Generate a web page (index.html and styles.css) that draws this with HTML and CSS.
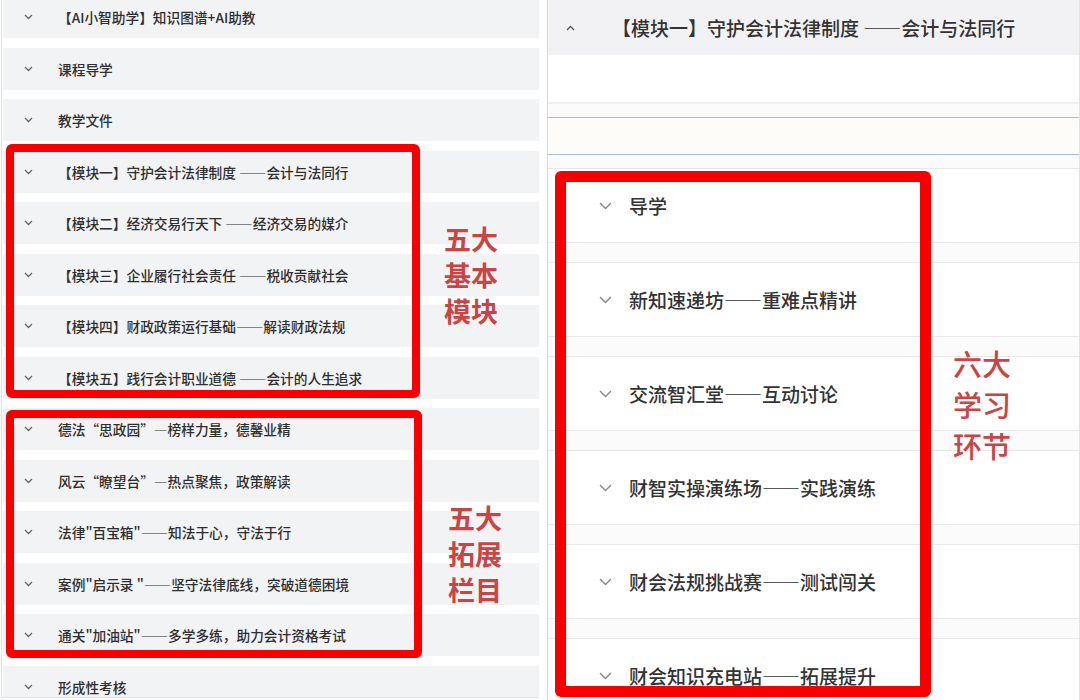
FILE: index.html
```
<!DOCTYPE html>
<html lang="zh-CN">
<head>
  <meta charset="UTF-8" />
  <title>课程目录</title>
  <link rel="stylesheet" href="styles.css">
</head>
<body>
  <div class="page">
    <section class="catalog">
      <ul class="rows">
        <li class="row"><svg class="chev" viewBox="0 0 9 6"><polyline points="1,1 4.5,4.5 8,1"/></svg><span>【AI小智助学】知识图谱+AI助教</span></li>
        <li class="row"><svg class="chev" viewBox="0 0 9 6"><polyline points="1,1 4.5,4.5 8,1"/></svg><span>课程导学</span></li>
        <li class="row"><svg class="chev" viewBox="0 0 9 6"><polyline points="1,1 4.5,4.5 8,1"/></svg><span>教学文件</span></li>
        <li class="row"><svg class="chev" viewBox="0 0 9 6"><polyline points="1,1 4.5,4.5 8,1"/></svg><span>【模块一】守护会计法律制度 ——会计与法同行</span></li>
        <li class="row"><svg class="chev" viewBox="0 0 9 6"><polyline points="1,1 4.5,4.5 8,1"/></svg><span>【模块二】经济交易行天下 ——经济交易的媒介</span></li>
        <li class="row"><svg class="chev" viewBox="0 0 9 6"><polyline points="1,1 4.5,4.5 8,1"/></svg><span>【模块三】企业履行社会责任 ——税收贡献社会</span></li>
        <li class="row"><svg class="chev" viewBox="0 0 9 6"><polyline points="1,1 4.5,4.5 8,1"/></svg><span>【模块四】财政政策运行基础——解读财政法规</span></li>
        <li class="row"><svg class="chev" viewBox="0 0 9 6"><polyline points="1,1 4.5,4.5 8,1"/></svg><span>【模块五】践行会计职业道德 ——会计的人生追求</span></li>
        <li class="row"><svg class="chev" viewBox="0 0 9 6"><polyline points="1,1 4.5,4.5 8,1"/></svg><span>德法“思政园”—榜样力量，德馨业精</span></li>
        <li class="row"><svg class="chev" viewBox="0 0 9 6"><polyline points="1,1 4.5,4.5 8,1"/></svg><span>风云“瞭望台”—热点聚焦，政策解读</span></li>
        <li class="row"><svg class="chev" viewBox="0 0 9 6"><polyline points="1,1 4.5,4.5 8,1"/></svg><span>法律"百宝箱"——知法于心，守法于行</span></li>
        <li class="row"><svg class="chev" viewBox="0 0 9 6"><polyline points="1,1 4.5,4.5 8,1"/></svg><span>案例"启示录 "——坚守法律底线，突破道德困境</span></li>
        <li class="row"><svg class="chev" viewBox="0 0 9 6"><polyline points="1,1 4.5,4.5 8,1"/></svg><span>通关"加油站"——多学多练，助力会计资格考试</span></li>
        <li class="row"><svg class="chev" viewBox="0 0 9 6"><polyline points="1,1 4.5,4.5 8,1"/></svg><span>形成性考核</span></li>
      </ul>
    </section>

    <section class="module">
      <div class="module-head">
        <svg class="caret" viewBox="0 0 9 6"><polyline points="1,5 4.5,1.5 8,5"/></svg>
        <span>【模块一】守护会计法律制度 ——会计与法同行</span>
      </div>
      <div class="blank"></div>
      <div class="editor"></div>
      <ul class="steps">
        <li class="step"><svg class="chev-lg" viewBox="0 0 13 8"><polyline points="1,1 6.5,6.5 12,1"/></svg><span>导学</span></li>
        <li class="step"><svg class="chev-lg" viewBox="0 0 13 8"><polyline points="1,1 6.5,6.5 12,1"/></svg><span>新知速递坊——重难点精讲</span></li>
        <li class="step"><svg class="chev-lg" viewBox="0 0 13 8"><polyline points="1,1 6.5,6.5 12,1"/></svg><span>交流智汇堂——互动讨论</span></li>
        <li class="step"><svg class="chev-lg" viewBox="0 0 13 8"><polyline points="1,1 6.5,6.5 12,1"/></svg><span>财智实操演练场——实践演练</span></li>
        <li class="step"><svg class="chev-lg" viewBox="0 0 13 8"><polyline points="1,1 6.5,6.5 12,1"/></svg><span>财会法规挑战赛——测试闯关</span></li>
        <li class="step"><svg class="chev-lg" viewBox="0 0 13 8"><polyline points="1,1 6.5,6.5 12,1"/></svg><span>财会知识充电站——拓展提升</span></li>
      </ul>
    </section>

    <!-- annotations drawn over the screenshots -->
    <div class="mark mark-basic"></div>
    <div class="mark mark-ext"></div>
    <div class="mark mark-steps"></div>
    <div class="note note-basic">五大<br>基本<br>模块</div>
    <div class="note note-ext">五大<br>拓展<br>栏目</div>
    <div class="note note-steps">六大<br>学习<br>环节</div>
  </div>
</body>
</html>
```

FILE: styles.css
```
body {
  margin: 0;
  font-family: "Noto Sans CJK SC", "Noto Sans", sans-serif;
  background-color: #fff;
  color: #333;
}

ul {
  list-style: none;
  margin: 0;
  padding: 0;
}

.page {
  position: relative;
  display: flex;
  gap: 8px;
  width: 1080px;
  height: 700px;
  overflow: hidden;
}

/* left: course catalogue */
.catalog {
  width: 536px;
  height: 697px;
  margin-left: 1px;
  padding-left: 1px;
  border-left: 1px solid #e3e3e3;
  border-bottom: 1px solid #e3e3e3;
  overflow: hidden;
}

.rows {
  display: flex;
  flex-direction: column;
  gap: 9.5px;
  margin-top: -4px;
}

.row {
  display: flex;
  align-items: center;
  height: 42px;
  flex-shrink: 0;
  padding-left: 21px;
  background-color: #f2f3f5;
  font-size: 13.7px;
  font-weight: 500;
  color: #2e2e2e;
}

.chev {
  width: 9px;
  height: 6px;
  margin-right: 25px;
  fill: none;
  stroke: #666;
  stroke-width: 1.3;
}

/* right: opened module */
.module {
  flex: 1;
  border-left: 1px solid #dcdcdc;
  border-right: 1px solid #e3e3e3;
  background-color: #fbfbfb;
}

.module-head {
  display: flex;
  align-items: center;
  height: 55px;
  padding-left: 18px;
  background-color: #f2f2f4;
  font-size: 19px;
  font-weight: 500;
  color: #333;
}

.caret {
  width: 9px;
  height: 6px;
  margin-right: 37px;
  fill: none;
  stroke: #555;
  stroke-width: 1.3;
}

.blank {
  height: 47px;
  background-color: #fff;
  border-bottom: 2px solid #f0f0f0;
}

.editor {
  height: 36px;
  margin-top: 13px;
  border-top: 1px solid #a9bdd5;
  border-bottom: 1px solid #a9bdd5;
  background-color: #fdfcf8;
}

.steps {
  display: flex;
  flex-direction: column;
  gap: 19px;
  margin-top: 13px;
}

.step {
  display: flex;
  align-items: center;
  height: 73px;
  flex-shrink: 0;
  padding-left: 51px;
  border-top: 1px solid #e8e8e8;
  border-bottom: 1px solid #e8e8e8;
  background-color: #fff;
  font-size: 19px;
  font-weight: 500;
  color: #333;
}

.chev-lg {
  width: 13px;
  height: 8px;
  margin-right: 17px;
  fill: none;
  stroke: #888;
  stroke-width: 1.4;
}

/* red annotation boxes */
.mark {
  position: absolute;
  box-sizing: border-box;
  border: 8px solid #f60000;
  border-radius: 6px;
}

.mark-basic {
  left: 6px;
  top: 144px;
  width: 414px;
  height: 254px;
}

.mark-ext {
  left: 6px;
  top: 410px;
  width: 416px;
  height: 248px;
}

.mark-steps {
  left: 555px;
  top: 171px;
  width: 376px;
  height: 526px;
  border-width: 11px;
}

.note {
  position: absolute;
  color: #c94545;
  font-size: 27px;
  font-weight: 700;
  line-height: 36px;
}

.note-basic {
  left: 444px;
  top: 221px;
}

.note-ext {
  left: 448px;
  top: 500px;
}

.note-steps {
  left: 953px;
  top: 343px;
  font-size: 29px;
  font-weight: 500;
  line-height: 41px;
}
```
